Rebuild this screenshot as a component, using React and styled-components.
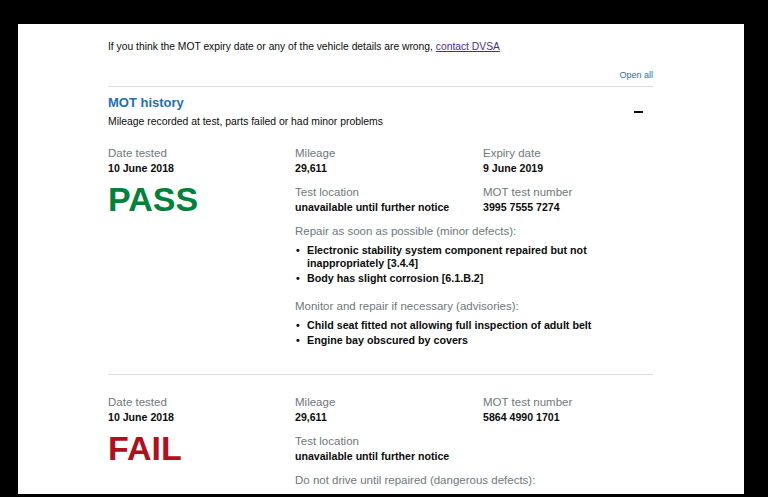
import styled, { createGlobalStyle } from 'styled-components';

const GlobalStyle = createGlobalStyle`
  html, body {
    margin: 0;
    padding: 0;
    background: #000;
    height: 497px;
    overflow: hidden;
  }
  body {
    font-family: "Liberation Sans", Arial, sans-serif;
    color: #0b0c0c;
  }
`;

const Card = styled.main`
  margin: 24px 24px 0 18px;
  height: 470px;
  background: #fff;
  overflow: hidden;
  padding: 15px 0 0 90px;
  box-sizing: border-box;
`;

const Content = styled.div`
  width: 545px;
`;

const Intro = styled.p`
  margin: 0;
  font-size: 10.3px;
  line-height: 15px;

  a {
    color: #4c2c92;
    text-decoration: underline;
  }
`;

const OpenAllRow = styled.div`
  margin-top: 15px;
  padding-bottom: 5px;
  font-size: 9px;
  line-height: 12px;
  text-align: right;
  border-bottom: 1px solid #dcdedf;

  a {
    color: #1d70b8;
    text-decoration: none;
  }
`;

const SectionHeader = styled.div`
  display: flex;
  justify-content: space-between;
  align-items: flex-start;
  padding-top: 7px;
`;

const Heading = styled.h2`
  margin: 0;
  font-size: 13px;
  line-height: 18px;
  font-weight: 700;
  color: #1d70b8;
`;

const Summary = styled.p`
  margin: 2px 0 0;
  font-size: 10.4px;
  line-height: 14px;
`;

const Minus = styled.span`
  display: block;
  width: 9px;
  height: 2px;
  background: #0b0c0c;
  margin: 17px 10px 0 0;
`;

const Record = styled.section`
  display: grid;
  grid-template-columns: 187px 188px 1fr;
  grid-auto-rows: min-content;
  row-gap: 9px;
  padding: ${(p) => (p.$first ? '17px 0 27px' : '20px 0 28px')};
  border-bottom: ${(p) => (p.$last ? 'none' : '1px solid #dcdedf')};
`;

const Cell = styled.div`
  grid-column: ${(p) => p.$col};
  grid-row: ${(p) => p.$row};
`;

const Label = styled.div`
  font-size: 11.5px;
  line-height: 15px;
  color: #6f777b;
`;

const Value = styled.div`
  font-size: 10.6px;
  line-height: 15px;
  font-weight: 700;
`;

const Status = styled.div`
  margin-top: 5px;
  font-size: 34px;
  line-height: 36px;
  font-weight: 700;
  color: ${(p) => (p.$pass ? '#00823b' : '#b10e1e')};
`;

const Defects = styled.div`
  grid-column: 2 / 4;
  display: flex;
  flex-direction: column;
  gap: 14px;
`;

const List = styled.ul`
  list-style: none;
  margin: 5px 0 0;
  padding: 0 0 0 12px;
  max-width: 300px;
  display: flex;
  flex-direction: column;
  gap: 2px;
`;

const Item = styled.li`
  position: relative;
  font-size: 10.7px;
  line-height: 13px;
  font-weight: 700;

  &::before {
    content: '•';
    position: absolute;
    left: -11px;
    top: 0;
  }
`;

const records = [
  {
    date: '10 June 2018',
    pass: true,
    mileage: '29,611',
    expiry: '9 June 2019',
    location: 'unavailable until further notice',
    number: '3995 7555 7274',
    defects: [
      {
        title: 'Repair as soon as possible (minor defects):',
        items: [
          'Electronic stability system component repaired but not inappropriately [3.4.4]',
          'Body has slight corrosion [6.1.B.2]',
        ],
      },
      {
        title: 'Monitor and repair if necessary (advisories):',
        items: [
          'Child seat fitted not allowing full inspection of adult belt',
          'Engine bay obscured by covers',
        ],
      },
    ],
  },
  {
    date: '10 June 2018',
    pass: false,
    mileage: '29,611',
    location: 'unavailable until further notice',
    number: '5864 4990 1701',
    defects: [
      {
        title: 'Do not drive until repaired (dangerous defects):',
        items: ['Parts lining or pads missing or seriously worn, rotor [1.1.13.a.2]'],
      },
    ],
  },
];

function Field({ label, value, col, row }) {
  return (
    <Cell $col={col} $row={row}>
      <Label>{label}</Label>
      <Value>{value}</Value>
    </Cell>
  );
}

function TestRecord({ record, first, last }) {
  return (
    <Record $first={first} $last={last}>
      <Cell $col={1} $row="1 / 4">
        <Label>Date tested</Label>
        <Value>{record.date}</Value>
        <Status $pass={record.pass}>{record.pass ? 'PASS' : 'FAIL'}</Status>
      </Cell>
      <Field label="Mileage" value={record.mileage} col={2} row={1} />
      {record.expiry ? (
        <>
          <Field label="Expiry date" value={record.expiry} col={3} row={1} />
          <Field label="MOT test number" value={record.number} col={3} row={2} />
        </>
      ) : (
        <Field label="MOT test number" value={record.number} col={3} row={1} />
      )}
      <Field label="Test location" value={record.location} col={2} row={2} />
      <Defects>
        {record.defects.map((group) => (
          <div key={group.title}>
            <Label>{group.title}</Label>
            <List>
              {group.items.map((item) => (
                <Item key={item}>{item}</Item>
              ))}
            </List>
          </div>
        ))}
      </Defects>
    </Record>
  );
}

export default function App() {
  return (
    <>
      <GlobalStyle />
      <Card>
        <Content>
          <Intro>
            If you think the MOT expiry date or any of the vehicle details are wrong,{' '}
            <a href="#contact">contact DVSA</a>
          </Intro>
          <OpenAllRow>
            <a href="#open">Open all</a>
          </OpenAllRow>
          <SectionHeader>
            <Heading>MOT history</Heading>
            <Minus />
          </SectionHeader>
          <Summary>Mileage recorded at test, parts failed or had minor problems</Summary>
          {records.map((record, i) => (
            <TestRecord
              key={record.number}
              record={record}
              first={i === 0}
              last={i === records.length - 1}
            />
          ))}
        </Content>
      </Card>
    </>
  );
}
